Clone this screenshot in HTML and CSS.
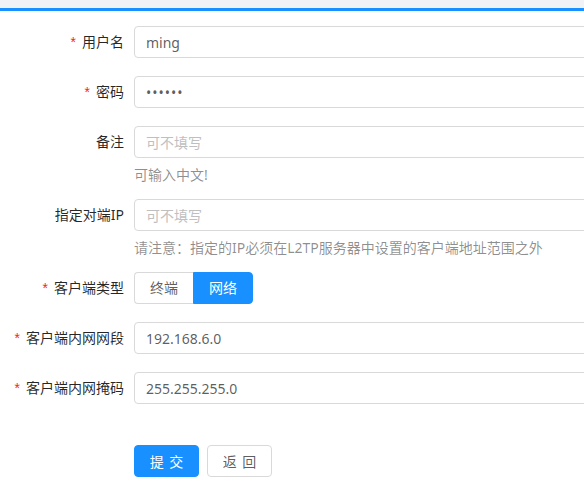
FILE: index.html
```html
<!DOCTYPE html>
<html lang="zh-CN">
<head>
<meta charset="utf-8">
<title>L2TP 客户端</title>
<link rel="stylesheet" href="styles.css">
</head>
<body>
<div class="topbar"></div>
<div class="card">
  <form class="form">
    <div class="item">
      <label class="label"><span class="req">*</span>用户名</label>
      <div class="control"><input class="input" type="text" value="ming"></div>
    </div>
    <div class="item">
      <label class="label"><span class="req">*</span>密码</label>
      <div class="control"><input class="input pwd" type="password" value="123456"></div>
    </div>
    <div class="item has-help">
      <label class="label">备注</label>
      <div class="control">
        <input class="input" type="text" placeholder="可不填写">
        <div class="help">可输入中文!</div>
      </div>
    </div>
    <div class="item has-help">
      <label class="label">指定对端IP</label>
      <div class="control">
        <input class="input" type="text" placeholder="可不填写">
        <div class="help">请注意：指定的IP必须在L2TP服务器中设置的客户端地址范围之外</div>
      </div>
    </div>
    <div class="item">
      <label class="label"><span class="req">*</span>客户端类型</label>
      <div class="control">
        <div class="radio-group">
          <span class="radio-btn">终端</span><span class="radio-btn checked">网络</span>
        </div>
      </div>
    </div>
    <div class="item">
      <label class="label"><span class="req">*</span>客户端内网网段</label>
      <div class="control"><input class="input" type="text" value="192.168.6.0"></div>
    </div>
    <div class="item last">
      <label class="label"><span class="req">*</span>客户端内网掩码</label>
      <div class="control"><input class="input" type="text" value="255.255.255.0"></div>
    </div>
    <div class="actions">
      <button type="button" class="btn primary">提 交</button>
      <button type="button" class="btn">返 回</button>
    </div>
  </form>
</div>
</body>
</html>
```

FILE: styles.css
```css
html, body {
  margin: 0;
  padding: 0;
  overflow: hidden;
  background: #fff;
}
body {
  font-family: "Noto Sans", "Noto Sans CJK SC", sans-serif;
  font-size: 14px;
  color: rgba(0, 0, 0, 0.85);
  width: 584px;
}
.topbar {
  height: 8px;
  background: #f0f2f5;
}
.card {
  border-top: 3px solid #1890ff;
  background: #fff;
  width: 760px;
  padding-top: 15px;
}
.form {
  margin: 0;
}
.item {
  display: flex;
  align-items: flex-start;
  margin-bottom: 18px;
}
.item.has-help {
  margin-bottom: 13px;
}
.item.last {
  margin-bottom: 41px;
}
.label {
  width: 124px;
  padding-right: 10px;
  text-align: right;
  line-height: 32px;
  height: 32px;
  white-space: nowrap;
  color: rgba(0, 0, 0, 0.85);
}
.req {
  color: #f5222d;
  margin-right: 6px;
  font-family: "Liberation Sans", sans-serif;
  font-size: 14px;
}
.control {
  flex: 1;
}
.input {
  box-sizing: border-box;
  display: block;
  width: 560px;
  height: 32px;
  padding: 4px 11px;
  border: 1px solid #d9d9d9;
  border-radius: 4px;
  font-family: "Noto Sans", "Noto Sans CJK SC", sans-serif;
  font-size: 14px;
  color: rgba(0, 0, 0, 0.65);
  background: #fff;
  outline: none;
}
.input::placeholder {
  color: #bfbfbf;
}
.pwd {
  letter-spacing: 1px;
}
.help {
  padding-top: 6px;
  line-height: 22px;
  color: rgba(0, 0, 0, 0.45);
  white-space: nowrap;
}
.radio-group {
  display: flex;
}
.radio-btn {
  box-sizing: border-box;
  height: 32px;
  line-height: 30px;
  border: 1px solid #d9d9d9;
  color: rgba(0, 0, 0, 0.65);
  background: #fff;
  width: 60px;
  text-align: center;
}
.radio-btn:first-child {
  border-radius: 4px 0 0 4px;
  width: 59px;
  border-right: none;
}
.radio-btn.checked {
  background: #1890ff;
  border-color: #1890ff;
  color: #fff;
  border-radius: 0 4px 4px 0;
}
.actions {
  display: flex;
  gap: 8px;
  padding-left: 134px;
}
.btn {
  box-sizing: border-box;
  width: 65px;
  height: 32px;
  border: 1px solid #d9d9d9;
  border-radius: 4px;
  background: #fff;
  color: rgba(0, 0, 0, 0.65);
  font-family: "Noto Sans", "Noto Sans CJK SC", sans-serif;
  font-size: 14px;
  word-spacing: 2px;
  padding: 0;
  cursor: pointer;
}
.btn.primary {
  background: #1890ff;
  border-color: #1890ff;
  color: #fff;
}
```
